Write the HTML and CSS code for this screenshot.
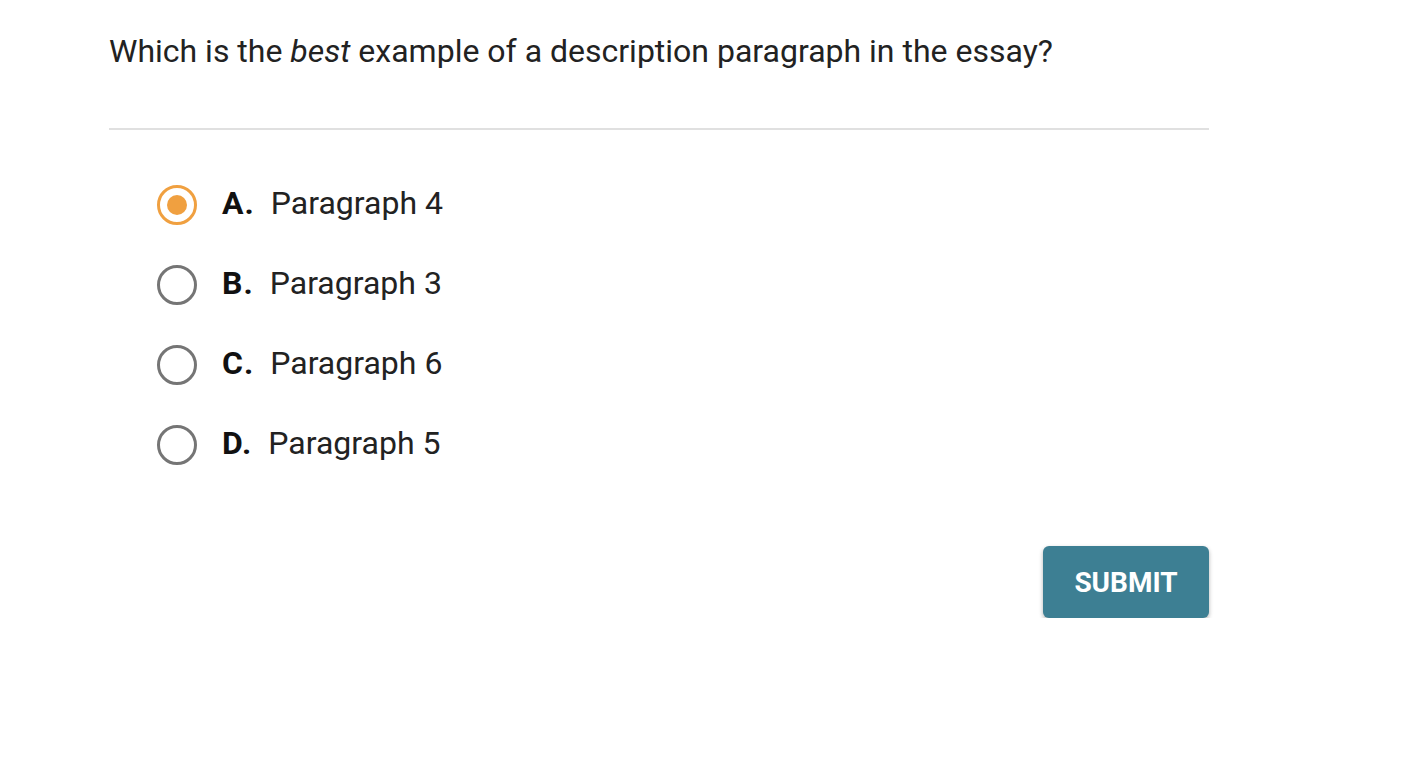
FILE: index.html
```html
<!DOCTYPE html>
<html>
<head>
<meta charset="utf-8">
<link rel="stylesheet" href="styles.css">
</head>
<body>
<div class="page">
  <div class="question">Which is the <em>best</em> example of a description paragraph in the essay?</div>
  <hr class="divider">
  <div class="options">
    <div class="option">
      <span class="radio selected"><span class="dot"></span></span>
      <span class="letter">A.</span>
      <span class="text">Paragraph 4</span>
    </div>
    <div class="option">
      <span class="radio"></span>
      <span class="letter">B.</span>
      <span class="text">Paragraph 3</span>
    </div>
    <div class="option">
      <span class="radio"></span>
      <span class="letter">C.</span>
      <span class="text">Paragraph 6</span>
    </div>
    <div class="option">
      <span class="radio"></span>
      <span class="letter">D.</span>
      <span class="text">Paragraph 5</span>
    </div>
  </div>
  <div class="actions">
    <button class="submit">SUBMIT</button>
  </div>
</div>
</body>
</html>
```
FILE: styles.css
```css
html, body {
  margin: 0;
  padding: 0;
  background: #ffffff;
}
body {
  font-family: Roboto, "Liberation Sans", sans-serif;
  color: #1f1f1f;
}
.page {
  width: 1100px;
  margin-left: 109px;
  padding-top: 30px;
}
.question {
  font-size: 32px;
  line-height: 42px;
  color: #222;
}
.question em {
  font-style: italic;
}
.divider {
  border: none;
  height: 2px;
  background: #e0e0e0;
  margin: 56px 0 0 0;
}
.options {
  display: flex;
  flex-direction: column;
  gap: 40px;
  padding-left: 48px;
  margin-top: 55px;
}
.option {
  display: flex;
  align-items: center;
  height: 40px;
}
.radio {
  box-sizing: border-box;
  width: 40px;
  height: 40px;
  border-radius: 50%;
  border: 3px solid #757575;
  display: flex;
  align-items: center;
  justify-content: center;
  flex: none;
}
.radio.selected {
  border-color: #f0a040;
}
.dot {
  width: 20px;
  height: 20px;
  border-radius: 50%;
  background: #f0a040;
}
.letter {
  font-weight: 700;
  font-size: 32px;
  margin-left: 25px;
  margin-right: 16px;
  letter-spacing: 1px;
  color: #111;
  padding-bottom: 4px;
}
.text {
  font-size: 32px;
  color: #222;
  padding-bottom: 4px;
}
.actions {
  display: flex;
  justify-content: flex-end;
  margin-top: 81px;
}
.submit {
  width: 166px;
  height: 72px;
  border: none;
  border-radius: 6px;
  background: #3d7f93;
  color: #fff;
  font-family: Roboto, "Liberation Sans", sans-serif;
  font-weight: 700;
  font-size: 28px;
  box-shadow: 0 2px 4px rgba(0,0,0,0.3);
  cursor: pointer;
}
```
